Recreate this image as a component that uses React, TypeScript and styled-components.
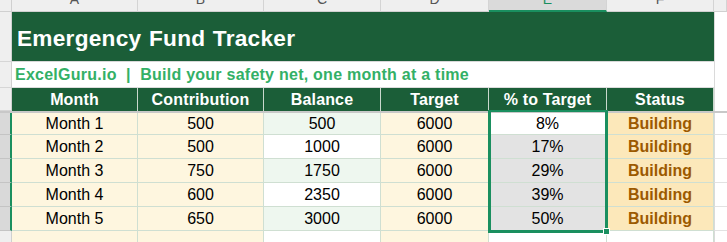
import React from 'react';
import styled, { createGlobalStyle } from 'styled-components';

const GREEN = '#1b5e38';
const SEL = '#1a8f5f';
const GRID = '#cfdfd2';
const CREAM = '#fef6df';
const MINT = '#eef7ef';
const STATUS_BG = '#fce8ba';

const Global = createGlobalStyle`
  html, body {
    margin: 0;
    padding: 0;
    background: #ffffff;
    font-family: "Liberation Sans", Arial, sans-serif;
  }
  * { box-sizing: border-box; }
`;

const Sheet = styled.div`
  position: relative;
  width: 727px;
  height: 242px;
  overflow: hidden;
  background: #ffffff;
`;

const Row = styled.div<{ $h: number }>`
  display: grid;
  grid-template-columns: 12px 126px 126px 117px 108px 118px 107px 1fr;
  height: ${(p) => p.$h}px;
`;

const Corner = styled.div`
  background: #efefef;
  border-right: 1px solid #d0d0d0;
  border-bottom: 1px solid #d0d0d0;
`;

// column letters sit mostly above the visible area, only their feet show
const ColLetter = styled.div<{ $active?: boolean }>`
  display: flex;
  align-items: flex-end;
  justify-content: center;
  overflow: hidden;
  background: ${(p) => (p.$active ? '#dadada' : '#efefef')};
  border-right: 1px solid #d4d4d4;
  border-bottom: ${(p) => (p.$active ? `2px solid ${SEL}` : '1px solid #d0d0d0')};
  span {
    font-size: 14px;
    line-height: 1;
    margin-bottom: ${(p) => (p.$active ? 4 : 5)}px;
    color: ${(p) => (p.$active ? SEL : '#555')};
  }
`;

const RowHead = styled.div<{ $sel?: boolean }>`
  background: ${(p) => (p.$sel ? '#d9d9d9' : '#efefef')};
  border-bottom: 1px solid ${(p) => (p.$sel ? '#c4c4c4' : '#d6d6d6')};
  border-right: ${(p) => (p.$sel ? `2px solid ${SEL}` : '1px solid #d0d0d0')};
`;

const Title = styled.div`
  grid-column: span 6;
  background: ${GREEN};
  color: #ffffff;
  font-weight: bold;
  font-size: 22.67px;
  letter-spacing: 0.25px;
  word-spacing: 1px;
  display: flex;
  align-items: center;
  padding: 3px 0 0 5px;
  border-bottom: 1px solid #d8d8d8;
`;

const Subtitle = styled.div`
  grid-column: span 6;
  color: #33b066;
  font-weight: bold;
  font-size: 16px;
  letter-spacing: 0.25px;
  display: flex;
  align-items: center;
  padding-left: 3px;
  white-space: pre;
  border-bottom: 1px solid #dcdcdc;
`;

const Blank = styled.div<{ $line?: boolean }>`
  background: #ffffff;
  border-left: 1px solid #dadada;
  border-bottom: ${(p) => (p.$line ? '1px solid #e2e2e2' : 'none')};
`;

const HeadCell = styled.div`
  background: ${GREEN};
  color: #ffffff;
  font-weight: bold;
  font-size: 16px;
  letter-spacing: 0.15px;
  display: flex;
  align-items: center;
  justify-content: center;
  border-right: 1px solid #c9d8cc;
`;

const Freeze = styled.div`
  height: 2px;
  background: #c8c8c8;
`;

const Cell = styled.div<{ $bg: string; $status?: boolean }>`
  background: ${(p) => p.$bg};
  color: ${(p) => (p.$status ? '#9c5a00' : '#000000')};
  font-weight: ${(p) => (p.$status ? 'bold' : 'normal')};
  font-size: 16px;
  display: flex;
  align-items: center;
  justify-content: center;
  border-right: 1px solid ${GRID};
  border-bottom: 1px solid ${GRID};
`;

const Selection = styled.div`
  position: absolute;
  left: 488px;
  top: 110px;
  width: 120px;
  height: 123px;
  border: 3px solid ${SEL};
  border-top-width: 2px;
  pointer-events: none;
`;

const Handle = styled.div`
  position: absolute;
  right: -5px;
  bottom: -5px;
  width: 7px;
  height: 7px;
  background: ${SEL};
  border: 1px solid #ffffff;
`;

const letters = ['A', 'B', 'C', 'D', 'E', 'F'];

const data = [
  { m: 'Month 1', c: 500, b: 500, t: 6000, p: '8%' },
  { m: 'Month 2', c: 500, b: 1000, t: 6000, p: '17%' },
  { m: 'Month 3', c: 750, b: 1750, t: 6000, p: '29%' },
  { m: 'Month 4', c: 600, b: 2350, t: 6000, p: '39%' },
  { m: 'Month 5', c: 650, b: 3000, t: 6000, p: '50%' },
];

export default function App() {
  return (
    <>
      <Global />
      <Sheet>
        <Row $h={12}>
          <Corner />
          {letters.map((l) => (
            <ColLetter key={l} $active={l === 'E'}>
              <span>{l}</span>
            </ColLetter>
          ))}
          <ColLetter />
        </Row>

        <Row $h={50}>
          <RowHead />
          <Title>Emergency Fund Tracker</Title>
          <Blank />
        </Row>

        <Row $h={26}>
          <RowHead />
          <Subtitle>ExcelGuru.io  |  Build your safety net, one month at a time</Subtitle>
          <Blank />
        </Row>

        <Row $h={23}>
          <RowHead />
          <HeadCell>Month</HeadCell>
          <HeadCell>Contribution</HeadCell>
          <HeadCell>Balance</HeadCell>
          <HeadCell>Target</HeadCell>
          <HeadCell>% to Target</HeadCell>
          <HeadCell>Status</HeadCell>
          <Blank />
        </Row>

        <Freeze />

        {data.map((r, i) => (
          <Row key={r.m} $h={i === 0 ? 22 : 24}>
            <RowHead $sel />
            <Cell $bg={CREAM}>{r.m}</Cell>
            <Cell $bg={CREAM}>{r.c}</Cell>
            <Cell $bg={i % 2 === 0 ? MINT : '#ffffff'}>{r.b}</Cell>
            <Cell $bg={CREAM}>{r.t}</Cell>
            <Cell $bg={i === 0 ? '#ffffff' : '#e3e3e3'}>{r.p}</Cell>
            <Cell $bg={STATUS_BG} $status>
              Building
            </Cell>
            <Blank $line />
          </Row>
        ))}

        <Row $h={20}>
          <RowHead />
          <Cell $bg={CREAM} />
          <Cell $bg={CREAM} />
          <Cell $bg="#ffffff" />
          <Cell $bg={CREAM} />
          <Cell $bg="#ffffff" />
          <Cell $bg="#ffffff" />
          <Blank />
        </Row>

        <Selection>
          <Handle />
        </Selection>
      </Sheet>
    </>
  );
}
